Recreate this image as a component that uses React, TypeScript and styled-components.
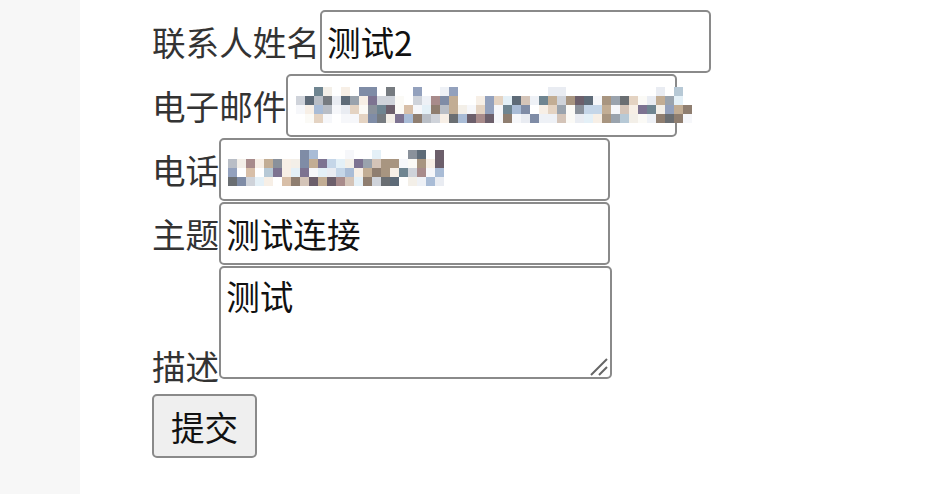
import React from "react";
import styled, { createGlobalStyle } from "styled-components";

// Styles
const GlobalStyle = createGlobalStyle`
  html, body {
    margin: 0;
    padding: 0;
    background: #ffffff;
  }
  body {
    font-family: "Noto Sans CJK SC", "Noto Sans", sans-serif;
  }
`;

const Page = styled.div`
  display: flex;
  min-height: 494px;
  width: 933px;
`;

const Sidebar = styled.div`
  background: #f7f7f7;
  flex: 0 0 80px;
`;

const Main = styled.main`
  flex: 1;
  padding: 10px 0 0 72px;
`;

const Form = styled.form`
  display: flex;
  flex-direction: column;
  gap: 1px;
  font-size: 33.6px;
`;

const Row = styled.div<{ $bottom?: boolean }>`
  display: flex;
  align-items: ${(p) => (p.$bottom ? "flex-end" : "center")};
`;

const Label = styled.label<{ $bottom?: boolean }>`
  color: #333333;
  line-height: ${(p) => (p.$bottom ? 1 : 1.4)};
  margin-bottom: ${(p) => (p.$bottom ? "-4px" : "0")};
  white-space: nowrap;
`;

const FieldWrap = styled.div`
  position: relative;
`;

const TextInput = styled.input`
  box-sizing: border-box;
  width: 391px;
  height: 63px;
  padding: 1px 5px;
  border: 2px solid #8a8a8a;
  border-radius: 5px;
  font-family: inherit;
  font-size: 33.6px;
  color: #111111;
  background: #ffffff;
  outline: none;
`;

const TextArea = styled.textarea`
  box-sizing: border-box;
  width: 393px;
  height: 113px;
  padding: 4px 5px;
  border: 2px solid #8a8a8a;
  border-radius: 5px;
  font-family: inherit;
  font-size: 33.6px;
  line-height: 1.45;
  color: #111111;
  background: #ffffff;
  outline: none;
  display: block;
  resize: none;
`;

const ResizeGrip = styled.svg`
  position: absolute;
  right: 4px;
  bottom: 3px;
  pointer-events: none;
`;

const SubmitButton = styled.button`
  align-self: flex-start;
  margin-top: 14px;
  box-sizing: border-box;
  height: 64px;
  padding: 0 17px;
  border: 2px solid #8a8a8a;
  border-radius: 5px;
  background: #efefef;
  font-family: inherit;
  font-size: 33.6px;
  color: #111111;
`;

const MosaicLayer = styled.svg<{ $left: number; $top: number }>`
  position: absolute;
  left: ${(p) => p.$left}px;
  top: ${(p) => p.$top}px;
  overflow: visible;
  pointer-events: none;
`;

// Pixelated placeholder for the hidden values
const lights = [
  "#ffffff", "#fbfaf6", "#f6f7fa", "#eef1f6", "#f3efe8", "#e9ecf2",
  "#e4f0f7", "#f7efe6",
];
const mids = [
  "#cfd3da", "#b9bec6", "#9aa3ad", "#8a919b", "#767b80", "#6a6e72",
  "#7f8ca6", "#93a1bd", "#a9bcd6", "#c5d6e8", "#e4d3c2", "#d8bfa8",
  "#c2ad94", "#a89580", "#8f7e70", "#a88b8b", "#6c5f6b", "#7d7391",
  "#5e6b78", "#6f8591", "#d4c4b8", "#b7c9d6",
];

const rand = (seed: number) => {
  let s = seed;
  return () => {
    s = (s * 9301 + 49297) % 233280;
    return s / 233280;
  };
};

interface IMosaic {
  cols: number;
  seed: number;
  left: number;
  top: number;
}

const Mosaic: React.FC<IMosaic> = ({ cols, seed, left, top }) => {
  const r = rand(seed);
  const cell = 9;
  const rows = 4;
  const cells: React.ReactNode[] = [];
  for (let y = 0; y < rows; y++) {
    for (let x = 0; x < cols; x++) {
      const v = r();
      // top row only holds a few ascender cells
      if (y === 0 && v > 0.25) continue;
      const pick = r();
      const c =
        pick < 0.38
          ? lights[Math.floor(r() * lights.length)]
          : mids[Math.floor(r() * mids.length)];
      cells.push(
        <rect key={`${x}-${y}`} x={x * cell} y={y * cell} width={cell} height={cell} fill={c} />
      );
    }
  }
  return (
    <MosaicLayer $left={left} $top={top} width={cols * cell} height={rows * cell}>
      {cells}
    </MosaicLayer>
  );
};

const App: React.FC = () => {
  return (
    <>
      <GlobalStyle />
      <Page>
        <Sidebar />
        <Main>
          <Form onSubmit={(e) => e.preventDefault()}>
            <Row>
              <Label>联系人姓名</Label>
              <TextInput defaultValue="测试2" />
            </Row>
            <Row>
              <Label>电子邮件</Label>
              <FieldWrap>
                <TextInput defaultValue="" />
                <Mosaic cols={44} seed={17} left={10} top={13} />
              </FieldWrap>
            </Row>
            <Row>
              <Label>电话</Label>
              <FieldWrap>
                <TextInput defaultValue="" />
                <Mosaic cols={24} seed={91} left={9} top={12} />
              </FieldWrap>
            </Row>
            <Row>
              <Label>主题</Label>
              <TextInput defaultValue="测试连接" />
            </Row>
            <Row $bottom>
              <Label $bottom>描述</Label>
              <FieldWrap>
                <TextArea defaultValue="测试" />
                <ResizeGrip width="18" height="18" viewBox="0 0 18 18">
                  <path d="M1 17 L17 1 M9 17 L17 9" stroke="#666" strokeWidth="2" />
                </ResizeGrip>
              </FieldWrap>
            </Row>
            <SubmitButton type="submit">提交</SubmitButton>
          </Form>
        </Main>
      </Page>
    </>
  );
};

export default App;
